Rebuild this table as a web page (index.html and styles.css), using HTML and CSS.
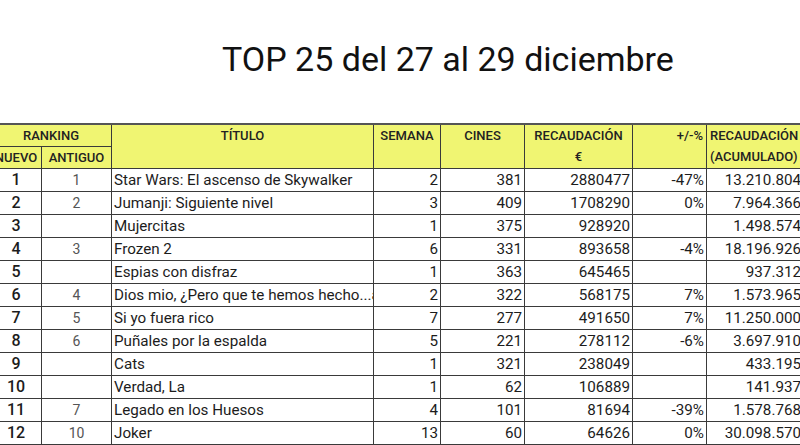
FILE: index.html
```html
<!DOCTYPE html>
<html lang="es">
<head>
<meta charset="utf-8">
<title>TOP 25</title>
<link rel="stylesheet" href="styles.css">
</head>
<body>
<h1 class="title">TOP 25 del 27 al 29 diciembre</h1>
<table class="grid">
  <colgroup>
    <col class="c-new"><col class="c-old"><col class="c-title"><col class="c-week"><col class="c-cines"><col class="c-rec"><col class="c-pct"><col class="c-acc">
  </colgroup>
  <thead>
    <tr class="h1">
      <th colspan="2" class="center">RANKING</th>
      <th rowspan="2" class="center top">TÍTULO</th>
      <th rowspan="2" class="center top">SEMANA</th>
      <th rowspan="2" class="center top">CINES</th>
      <th rowspan="2" class="center top">RECAUDACIÓN<br>€</th>
      <th rowspan="2" class="right top">+/-%</th>
      <th rowspan="2" class="left top">RECAUDACIÓN<br>(ACUMULADO)</th>
    </tr>
    <tr class="h2">
      <th class="center">NUEVO</th>
      <th class="center">ANTIGUO</th>
    </tr>
  </thead>
  <tbody>
    <tr><td class="new">1</td><td class="old">1</td><td class="name">Star Wars: El ascenso de Skywalker</td><td class="num">2</td><td class="num">381</td><td class="num">2880477</td><td class="num">-47%</td><td class="num">13.210.804</td></tr>
    <tr><td class="new">2</td><td class="old">2</td><td class="name">Jumanji: Siguiente nivel</td><td class="num">3</td><td class="num">409</td><td class="num">1708290</td><td class="num">0%</td><td class="num">7.964.366</td></tr>
    <tr><td class="new">3</td><td class="old"></td><td class="name">Mujercitas</td><td class="num">1</td><td class="num">375</td><td class="num">928920</td><td class="num"></td><td class="num">1.498.574</td></tr>
    <tr><td class="new">4</td><td class="old">3</td><td class="name">Frozen 2</td><td class="num">6</td><td class="num">331</td><td class="num">893658</td><td class="num">-4%</td><td class="num">18.196.926</td></tr>
    <tr><td class="new">5</td><td class="old"></td><td class="name">Espias con disfraz</td><td class="num">1</td><td class="num">363</td><td class="num">645465</td><td class="num"></td><td class="num">937.312</td></tr>
    <tr><td class="new">6</td><td class="old">4</td><td class="name">Dios mio, ¿Pero que te hemos hecho...ahora?</td><td class="num">2</td><td class="num">322</td><td class="num">568175</td><td class="num">7%</td><td class="num">1.573.965</td></tr>
    <tr><td class="new">7</td><td class="old">5</td><td class="name">Si yo fuera rico</td><td class="num">7</td><td class="num">277</td><td class="num">491650</td><td class="num">7%</td><td class="num">11.250.000</td></tr>
    <tr><td class="new">8</td><td class="old">6</td><td class="name">Puñales por la espalda</td><td class="num">5</td><td class="num">221</td><td class="num">278112</td><td class="num">-6%</td><td class="num">3.697.910</td></tr>
    <tr><td class="new">9</td><td class="old"></td><td class="name">Cats</td><td class="num">1</td><td class="num">321</td><td class="num">238049</td><td class="num"></td><td class="num">433.195</td></tr>
    <tr><td class="new">10</td><td class="old"></td><td class="name">Verdad, La</td><td class="num">1</td><td class="num">62</td><td class="num">106889</td><td class="num"></td><td class="num">141.937</td></tr>
    <tr><td class="new">11</td><td class="old">7</td><td class="name">Legado en los Huesos</td><td class="num">4</td><td class="num">101</td><td class="num">81694</td><td class="num">-39%</td><td class="num">1.578.768</td></tr>
    <tr><td class="new">12</td><td class="old">10</td><td class="name">Joker</td><td class="num">13</td><td class="num">60</td><td class="num">64626</td><td class="num">0%</td><td class="num">30.098.570</td></tr>
  </tbody>
</table>
</body>
</html>
```
FILE: styles.css
```css
html, body {
  margin: 0;
  padding: 0;
  background: #ffffff;
  overflow: hidden;
}
body {
  font-family: Roboto, "Liberation Sans", sans-serif;
  color: #1a1a1a;
  width: 800px;
  height: 445px;
}
.title {
  margin: 0;
  padding: 39px 0 0 222px;
  height: 123px;
  box-sizing: border-box;
  font-size: 34px;
  font-weight: 400;
  line-height: 40px;
  color: #111;
  white-space: nowrap;
}
.grid {
  margin-left: -10px;
  border-collapse: collapse;
  table-layout: fixed;
  width: 813px;
}
.c-new { width: 51px; }
.c-old { width: 70px; }
.c-title { width: 262px; }
.c-week { width: 67px; }
.c-cines { width: 84px; }
.c-rec { width: 108px; }
.c-pct { width: 74px; }
.c-acc { width: 97px; }
.grid th, .grid td {
  border: 1px solid #3a3a3a;
  padding: 0 3px;
  overflow: hidden;
  white-space: nowrap;
}
.grid th {
  background: #f0f572;
  font-size: 13px;
  font-weight: 500;
  color: #222;
  line-height: 21px;
  height: 21px;
}
.grid thead tr.h1 th { border-top: 2px solid #555; }
.grid th.top { vertical-align: top; }
.center { text-align: center; }
.right { text-align: right; }
.left { text-align: left; }
.grid td {
  height: 22px;
  font-size: 15.2px;
  line-height: 22px;
  color: #1c1c1c;
}
.grid td.new {
  text-align: center;
  font-size: 16px;
  font-weight: 500;
}
.grid td.old {
  text-align: center;
  font-size: 14px;
  color: #555;
}
.grid td.name {
  text-align: left;
  padding: 0 0 0 2px;
  text-overflow: clip;
}
.grid td.num {
  text-align: right;
  padding-right: 2px;
}
```
